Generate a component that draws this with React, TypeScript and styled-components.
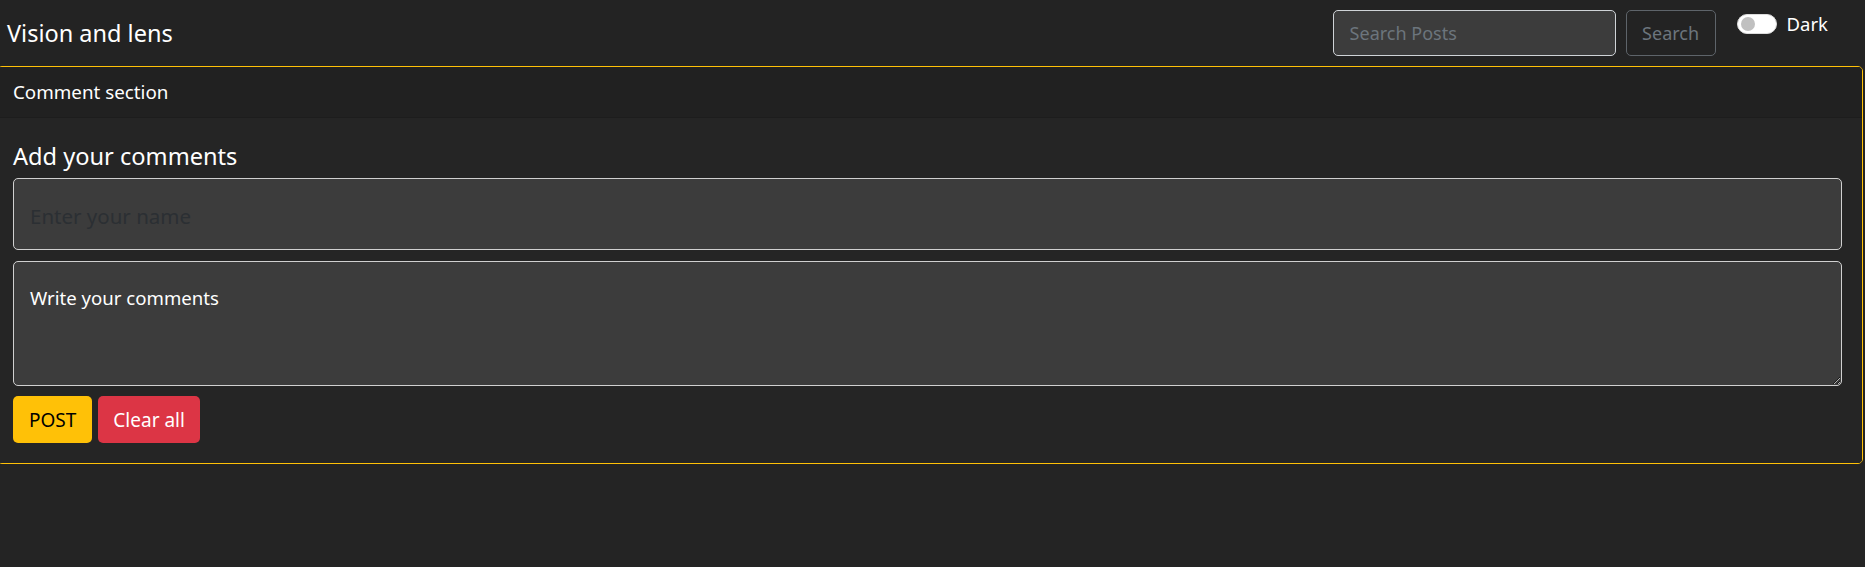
import React from "react";
import styled, { createGlobalStyle } from "styled-components";

const Global = createGlobalStyle`
  html, body { margin: 0; padding: 0; background: #242424; overflow: hidden; }
  body { font-family: "Noto Sans", "Open Sans", sans-serif; color: #fff; }
  * { box-sizing: border-box; }
`;

const Nav = styled.nav`
  display: flex;
  align-items: center;
  height: 66px;
  padding: 0 37px 0 7px;
  background: #232323;
`;

const Brand = styled.div`
  flex: 1;
  font-size: 23.5px;
  color: #fff;
  margin-top: -1px;
`;

const SearchForm = styled.form`
  display: flex;
  gap: 10px;
  align-items: center;
`;

const SearchInput = styled.input`
  width: 283px;
  height: 46px;
  background: #3c3c3c;
  border: 1px solid #cfd3d7;
  border-radius: 5px;
  padding: 0 16px;
  font-family: inherit;
  font-size: 18px;
  color: #fff;
  outline: none;
  &::placeholder { color: #6c757d; }
`;

const OutlineButton = styled.button`
  width: 90px;
  height: 46px;
  background: transparent;
  border: 1px solid #5e646a;
  border-radius: 5px;
  color: #6c757d;
  font-family: inherit;
  font-size: 18px;
  padding: 0;
`;

const SwitchGroup = styled.label`
  align-self: flex-start;
  margin-top: 11px;
  margin-left: 21px;
  display: flex;
  align-items: center;
  gap: 10px;
  font-size: 18.5px;
  color: #fff;
`;

const Track = styled.span`
  position: relative;
  width: 40px;
  height: 20px;
  border-radius: 10px;
  background: #fff;
  border: 1px solid #dcdcdc;
`;

const Knob = styled.span`
  position: absolute;
  left: 3px;
  top: 2px;
  width: 14px;
  height: 14px;
  border-radius: 50%;
  background: #c0c0c0;
`;

const Card = styled.section`
  margin: 0 2px 0 -3px;
  border: 1px solid #ffc107;
  border-radius: 5px;
  overflow: hidden;
`;

const CardHeader = styled.header`
  height: 51px;
  display: flex;
  align-items: center;
  padding: 0 15px;
  background: #212121;
  border-bottom: 1px solid #1d1d1d;
  font-size: 18.8px;
  color: #fff;
`;

const CardBody = styled.div`
  background: #252525;
  padding: 22px 20px 20px 15px;
  display: flex;
  flex-direction: column;
`;

const Heading = styled.h4`
  margin: 0 0 6px;
  font-size: 23.6px;
  font-weight: 400;
  line-height: 32px;
  color: #fff;
`;

const NameInput = styled.input`
  height: 72px;
  background: #3c3c3c;
  border: 1px solid #d0d0d0;
  border-radius: 5px;
  padding: 3px 16px 0;
  font-family: inherit;
  font-size: 20.5px;
  color: #fff;
  outline: none;
  margin-bottom: 11px;
  &::placeholder { color: #2b2f33; }
`;

const CommentArea = styled.textarea`
  height: 125px;
  background: #3c3c3c;
  border: 1px solid #d0d0d0;
  border-radius: 5px;
  padding: 22px 16px 10px;
  font-family: inherit;
  font-size: 18.6px;
  line-height: 28px;
  color: #fff;
  outline: none;
  resize: vertical;
  margin-bottom: 10px;
  &::placeholder { color: #fff; opacity: 1; }
`;

const Actions = styled.div`
  display: flex;
  gap: 6px;
`;

const ActionButton = styled.button<{ $variant: "warning" | "danger" }>`
  height: 47px;
  padding: 0 ${(p) => (p.$variant === "warning" ? "16px" : "15px")};
  border: none;
  border-radius: 5px;
  font-family: inherit;
  font-size: 19px;
  background: ${(p) => (p.$variant === "warning" ? "#ffc107" : "#dc3545")};
  color: ${(p) => (p.$variant === "warning" ? "#000" : "#fff")};
`;

export default function App() {
  return (
    <>
      <Global />
      <Nav>
        <Brand>Vision and lens</Brand>
        <SearchForm onSubmit={(e) => e.preventDefault()}>
          <SearchInput placeholder="Search Posts" />
          <OutlineButton type="submit">Search</OutlineButton>
        </SearchForm>
        <SwitchGroup>
          <Track>
            <Knob />
          </Track>
          Dark
        </SwitchGroup>
      </Nav>
      <Card>
        <CardHeader>Comment section</CardHeader>
        <CardBody>
          <Heading>Add your comments</Heading>
          <NameInput placeholder="Enter your name" />
          <CommentArea placeholder="Write your comments" />
          <Actions>
            <ActionButton $variant="warning">POST</ActionButton>
            <ActionButton $variant="danger">Clear all</ActionButton>
          </Actions>
        </CardBody>
      </Card>
    </>
  );
}
